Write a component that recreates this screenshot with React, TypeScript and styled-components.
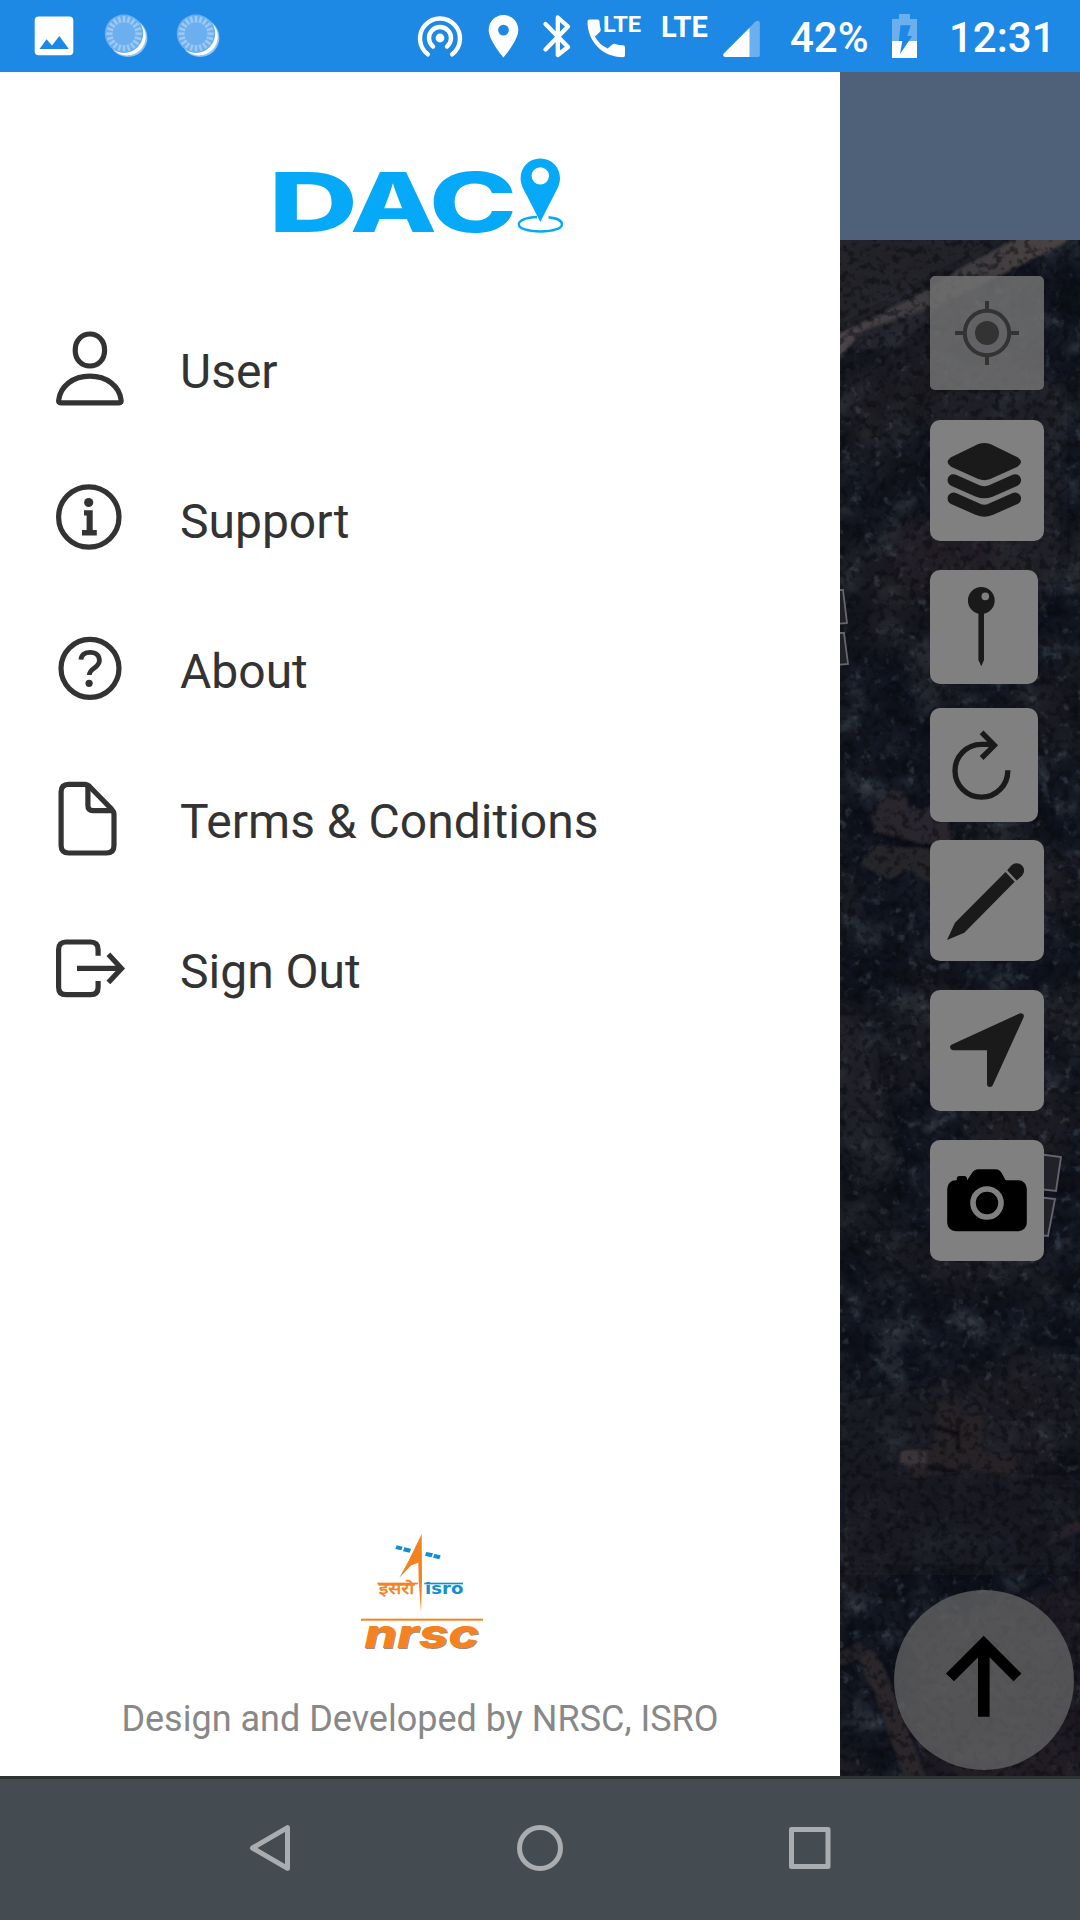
import React from 'react';
import styled, { createGlobalStyle } from 'styled-components';

const GlobalStyle = createGlobalStyle`
  * { box-sizing: border-box; }
  body { margin: 0; background: #fff; font-family: Roboto, "Noto Sans", sans-serif; }
  svg { display: block; flex: none; }
`;

const Screen = styled.div`
  width: 1080px;
  height: 1920px;
  display: flex;
  flex-direction: column;
  overflow: hidden;
`;

/* ---------- status bar ---------- */

const StatusBar = styled.header`
  height: 72px;
  flex: none;
  display: flex;
  background: #1e88e5;
  color: #fff;
`;

const StatusIcon = styled.svg<{ $gap: number }>`
  height: 72px;
  margin-left: ${(p) => p.$gap}px;
`;

const StatusText = styled.span<{ $gap: number; $width: number }>`
  width: ${(p) => p.$width}px;
  margin-left: ${(p) => p.$gap}px;
  font-size: 42px;
  font-weight: 500;
  line-height: 75px;
  white-space: nowrap;
`;

const NetworkText = styled.span`
  width: 48px;
  margin-left: 19px;
  font-size: 29px;
  font-weight: 700;
  line-height: 55px;
  white-space: nowrap;
`;

/* ---------- body ---------- */

const Body = styled.main`
  height: 1704px;
  flex: none;
  display: flex;
`;

const Drawer = styled.aside`
  width: 840px;
  flex: none;
  display: flex;
  flex-direction: column;
  align-items: center;
  padding-top: 78px;
  background: #fff;
`;

const LogoMark = styled.svg`
  overflow: visible;
`;

const Menu = styled.nav`
  width: 100%;
  margin-top: 56px;
  display: flex;
  flex-direction: column;
`;

const MenuRow = styled.a`
  height: 150px;
  display: flex;
  align-items: center;
  gap: 48px;
  padding-left: 48px;
  color: #333;
  font-size: 48px;
`;

const MenuLabel = styled.span`
  line-height: 56px;
  padding-top: 1px;
`;

const Footer = styled.footer`
  margin-top: auto;
  display: flex;
  flex-direction: column;
  align-items: center;
  padding-bottom: 35px;
`;

const Credit = styled.p`
  margin: 37px 0 0;
  font-size: 36px;
  line-height: 44px;
  color: #888;
  white-space: nowrap;
`;

/* ---------- map ---------- */

const MapColumn = styled.section`
  width: 240px;
  flex: none;
  display: flex;
  flex-direction: column;
`;

const MapHeader = styled.div`
  height: 168px;
  background: #4e6179;
`;

const MapArea = styled.div`
  height: 1536px;
  display: grid;
  grid-template: 1536px / 240px;
  > * { grid-area: 1 / 1; }
`;

const MapTools = styled.div`
  z-index: 1;
  display: flex;
  flex-direction: column;
  padding: 36px 6px 6px 90px;
`;

const ToolButton = styled.button<{ $w: number; $h: number; $gap?: number; $faint?: boolean }>`
  width: ${(p) => p.$w}px;
  height: ${(p) => p.$h}px;
  flex: none;
  margin: ${(p) => p.$gap ?? 0}px 0 0;
  padding: 0;
  border: 0;
  border-radius: ${(p) => (p.$faint ? 5 : 10)}px;
  background: ${(p) => (p.$faint ? 'rgba(116,116,116,.82)' : '#808080')};
  box-shadow: ${(p) => (p.$faint ? '0 1px 4px rgba(0,0,0,.25)' : 'none')};
  color: #1a1a1a;
`;

const NorthButton = styled.button`
  width: 180px;
  height: 180px;
  flex: none;
  align-self: flex-end;
  margin: auto 0 0;
  padding: 0;
  border: 0;
  border-radius: 50%;
  background: rgba(102, 102, 102, 0.74);
`;

/* ---------- system navigation ---------- */

const NavBar = styled.footer`
  height: 144px;
  flex: none;
  display: flex;
  justify-content: center;
  align-items: center;
  border-top: 3px solid #2d3235;
  padding-bottom: 3px;
  background: #454c51;
`;

const NavButton = styled.button`
  width: 270px;
  display: flex;
  justify-content: center;
  padding: 0;
  border: 0;
  background: none;
`;

const ticks = Array.from({ length: 20 }, (_, i) => i * 18);

function Spinner({ gap }: { gap: number }) {
  return (
    <StatusIcon $gap={gap} width="44" viewBox="104 0 44 72">
      <circle cx="128" cy="37.7" r="19.4" fill="#8fc3f1" />
      <circle cx="127" cy="36.7" r="18.8" fill="#fff" />
      <circle cx="124" cy="33.7" r="19.2" fill="#6bafee" />
      <g stroke="#9bc9f3" strokeWidth="2.6">
        {ticks.map((a) => (
          <line key={a} x1="124" y1="16" x2="124" y2="22.3" transform={`rotate(${a} 124 33.7)`} />
        ))}
      </g>
    </StatusIcon>
  );
}

function Status() {
  return (
    <StatusBar>
      <StatusIcon $gap={33} width="42" viewBox="33 0 42 72">
        <rect x="34.7" y="16.5" width="38.6" height="38.8" rx="4" fill="#fff" />
        <path d="M39.5 49 L46.5 39.2 L52 45.5 L59.3 36 L68.8 49Z" fill="#1e88e5" />
      </StatusIcon>
      <Spinner gap={29} />
      <Spinner gap={28} />
      <StatusIcon $gap={195} width="50" viewBox="415 0 50 72" fill="none" stroke="#fff" strokeWidth="4.4">
        <path d="M427.8 54.3 A20 20 0 1 1 452.2 54.3" strokeLinecap="round" />
        <path d="M433 46.5 A11 11 0 1 1 447 46.5" strokeLinecap="round" />
        <circle cx="440" cy="38" r="4.4" fill="#fff" stroke="none" />
      </StatusIcon>
      <StatusIcon $gap={21} width="36" viewBox="486 0 36 72">
        <path fill="#fff" fillRule="evenodd" d="M503.5 15 C495.2 15 488.7 21.6 488.7 30 C488.7 40.5 503.5 57.5 503.5 57.5 S518.3 40.5 518.3 30 C518.3 21.6 511.8 15 503.5 15Z M503.5 24.7 a5.4 5.4 0 1 1 0 10.8 a5.4 5.4 0 1 1 0 -10.8Z" />
      </StatusIcon>
      <StatusIcon $gap={18} width="34" viewBox="540 0 34 72">
        <path d="M545.5 24 L568 47 L557.8 55 V17.5 L568 26.5 L545.5 49.5" fill="none" stroke="#fff" strokeWidth="4.3" strokeLinejoin="round" strokeLinecap="round" />
      </StatusIcon>
      <StatusIcon $gap={10} width="58" viewBox="584 0 58 72" fill="#fff">
        <path d="M589.5 19.5 H597.5 Q599.5 19.5 599.5 21.5 Q599.5 25.5 600.6 29 Q601 30.7 600 31.8 L595 36.5 Q599 44.5 607.7 48.6 L612.6 44.2 Q613.8 43.4 615.2 43.9 Q618.6 45 622.9 45.2 Q625 45.3 625 47.2 V55.2 Q625 57.2 623 57.2 C602.5 57.2 587.5 41.5 587.5 21.5 Q587.5 19.5 589.5 19.5Z" />
        <text x="603" y="31.7" fontSize="22.5" fontWeight="700" textLength="38" lengthAdjust="spacingAndGlyphs">LTE</text>
      </StatusIcon>
      <NetworkText>LTE</NetworkText>
      <StatusIcon $gap={12} width="40" viewBox="721 0 40 72">
        <path d="M723.8 53.5 L755.5 21.6 Q759.6 19.5 759.8 23 V55.2 Q759.8 57 758 57 H725.5 Q722 56.5 723.8 53.5Z" fill="#6bafee" />
        <path d="M723.8 53.5 L749.5 28 V57 H725.5 Q722 56.5 723.8 53.5Z" fill="#fff" />
      </StatusIcon>
      <StatusText $gap={29} $width={78}>42%</StatusText>
      <StatusIcon $gap={23} width="27" viewBox="891 0 27 72">
        <path d="M892 19 H899 V14 H910 V19 H917 V41 H892Z" fill="#6bafee" />
        <path d="M892 41 H917 V58 H892Z" fill="#fff" />
        <path d="M900.5 25.3 H910.7 L907.3 36 H912.3 L900 54 L902.3 40.9 H898.8Z" fill="#1e88e5" />
      </StatusIcon>
      <StatusText $gap={31} $width={104}>12:31</StatusText>
    </StatusBar>
  );
}

function Logo() {
  return (
    <LogoMark width="300" height="90" viewBox="270 150 300 90" fill="#06a9f8">
      <g fontFamily="Inter, 'Liberation Sans', sans-serif" fontWeight="800" fontSize="82.5">
        <text x="268.5" y="232" textLength="89.5" lengthAdjust="spacingAndGlyphs">D</text>
        <text x="350" y="232" textLength="87" lengthAdjust="spacingAndGlyphs">A</text>
        <text x="429" y="232" textLength="88" lengthAdjust="spacingAndGlyphs">C</text>
      </g>
      <path fillRule="evenodd" d="M540.3 158.5 C529 158.5 520.6 167 520.6 178.2 C520.6 184 523.5 189.5 526 194 L540.3 222 L554.6 194 C557 189.5 560 184 560 178.2 C560 167 551.6 158.5 540.3 158.5Z M540.3 167.2 a8.7 8.7 0 1 1 0 17.4 a8.7 8.7 0 1 1 0 -17.4Z" />
      <path d="M537 217 C526 217.3 518.8 220.5 518.8 224.2 C518.8 228.5 528 231.5 540.5 231.5 S562 228.5 562 224.2 C562 220.7 556.5 218 548.5 217.2" fill="none" stroke="#06a9f8" strokeWidth="2.4" />
    </LogoMark>
  );
}

const menu: { label: string; art: React.ReactNode }[] = [
  {
    label: 'User',
    art: (
      <>
        <path d="M41.9 8 C50.2 8 56.6 14.4 56.6 24.2 C56.6 33.8 50 40 41.9 40 S27.2 33.8 27.2 24.2 C27.2 14.4 33.6 8 41.9 8Z" />
        <path d="M10.7 74 C12.5 60 25 50.2 41.9 50.2 S71.3 60 73.1 74 Q73.6 76.8 71 76.8 H12.8 Q10.2 76.8 10.7 74Z" />
      </>
    ),
  },
  {
    label: 'Support',
    art: (
      <>
        <circle cx="40.8" cy="41" r="30.2" />
        <circle cx="40.7" cy="26.5" r="4.6" fill="#333" stroke="none" />
        <path d="M36 34.2 H44.7 V53.9 H48.8 V59.5 H34 V53.9 H38.6 V39.5 H36Z" fill="#333" stroke="none" />
      </>
    ),
  },
  {
    label: 'About',
    art: (
      <>
        <circle cx="42" cy="42.3" r="29" />
        <path d="M33 33.7 C33.2 29 36.7 26.3 42.3 26.3 S51.4 29.5 51.4 34.6 C51.4 42.3 41.4 41.5 41.4 49" strokeWidth="4.8" />
        <circle cx="41.1" cy="57.3" r="3.6" fill="#333" stroke="none" />
      </>
    ),
  },
  {
    label: 'Terms & Conditions',
    art: (
      <>
        <path d="M20.6 8.3 H36.5 Q39.8 8.3 42 11 L63.5 33 Q66 35.6 66 38 V69.5 Q66 77 58.5 77 H20.6 Q13.1 77 13.1 69.5 V15.8 Q13.1 8.3 20.6 8.3Z" />
        <path d="M39.9 8.3 V29.5 Q39.9 34.6 45 34.6 H65" />
      </>
    ),
  },
  {
    label: 'Sign Out',
    art: (
      <>
        <path d="M50.1 29.7 V23.5 Q50.1 16 42.6 16 H18.1 Q10.6 16 10.6 23.5 V61.2 Q10.6 68.7 18.1 68.7 H42.6 Q50.1 68.7 50.1 61.2 V55" />
        <path d="M29 42.4 H74" />
        <path d="M60.4 28.3 L73.5 42.4 L60.4 56.5" />
      </>
    ),
  },
];

function IsroLogo() {
  return (
    <LogoMark width="160" height="140" viewBox="0 0 480 420">
      <g fill="#f58220">
        <path d="M245 42 L246 180 L243 276 L236 180 L235 128 L214 136 L178 173 L207 120Z" />
        <rect x="112" y="188" width="122" height="5" />
        <text x="116" y="223" fontSize="50" fontWeight="400" stroke="#f58220" strokeWidth="1.5" fontFamily="'Noto Sans Devanagari', 'Noto Sans', FreeSans, sans-serif" textLength="107" lengthAdjust="spacingAndGlyphs">इसरो</text>
        <rect x="63" y="296" width="366" height="6" />
      </g>
      <g fill="#1090d0">
        <path d="M170 76 L188 80 L184 91 L166 87Z M193 82 L213 86 L209 98 L189 94Z M259 96 L279 100 L275 112 L255 107Z M283 102 L302 106 L298 118 L279 113Z" />
        <rect x="253" y="188" width="116" height="5" />
        <text x="255" y="221" fontSize="48" fontWeight="700" fontFamily="'DejaVu Sans', sans-serif" textLength="115" lengthAdjust="spacingAndGlyphs">isro</text>
      </g>
      <g fontFamily="Inter, 'Liberation Sans', sans-serif" fontWeight="800" fontStyle="italic" fontSize="122">
        <text x="76" y="386" fill="#a28b78" textLength="344" lengthAdjust="spacingAndGlyphs">nrsc</text>
        <text x="73" y="383" fill="#f58220" textLength="344" lengthAdjust="spacingAndGlyphs">nrsc</text>
      </g>
    </LogoMark>
  );
}

function Satellite() {
  return (
    <svg width="240" height="1536" viewBox="0 0 240 1536">
      <defs>
        <filter id="canopy" x="0" y="0" width="100%" height="100%" colorInterpolationFilters="sRGB">
          <feTurbulence type="fractalNoise" baseFrequency="0.028" numOctaves="5" seed="11" />
          <feColorMatrix values="1 0 0 0 0  1 0 0 0 0  1 0 0 0 0  0 0 0 0 1" />
          <feComponentTransfer result="tone">
            <feFuncR type="table" tableValues="0.045 0.05 0.062 0.09 0.17 0.3" />
            <feFuncG type="table" tableValues="0.055 0.062 0.074 0.105 0.195 0.33" />
            <feFuncB type="table" tableValues="0.075 0.09 0.115 0.145 0.23 0.36" />
          </feComponentTransfer>
          <feGaussianBlur stdDeviation="0.8" />
        </filter>
        <filter id="haze" x="0" y="0" width="100%" height="100%" colorInterpolationFilters="sRGB">
          <feTurbulence type="fractalNoise" baseFrequency="0.008" numOctaves="2" seed="23" />
          <feColorMatrix values="0 0 0 0 .15  0 0 0 0 .135  0 0 0 0 .15  4 0 0 0 -1.8" />
        </filter>
        <filter id="grain" x="0" y="0" width="100%" height="100%" colorInterpolationFilters="sRGB">
          <feTurbulence type="fractalNoise" baseFrequency="0.09" numOctaves="3" seed="4" />
          <feColorMatrix values="0 0 0 0 .28  0 0 0 0 .33  0 0 0 0 .38  5 0 0 0 -3.05" />
          <feGaussianBlur stdDeviation="0.7" />
        </filter>
        <filter id="speckle" x="0" y="0" width="100%" height="100%" colorInterpolationFilters="sRGB">
          <feTurbulence type="fractalNoise" baseFrequency="0.13" numOctaves="3" seed="31" />
          <feColorMatrix values="0 0 0 0 .03  0 0 0 0 .035  0 0 0 0 .05  0 5 0 0 -2.5" />
          <feGaussianBlur stdDeviation="0.7" />
        </filter>
        <filter id="soft" x="-30%" y="-30%" width="160%" height="160%">
          <feGaussianBlur stdDeviation="8" />
        </filter>
        <filter id="edge"><feGaussianBlur stdDeviation="1.6" /></filter>
        <linearGradient id="road" x1="0" x2="1" y1="0" y2="0">
          <stop offset="0" stopColor="#4b4447" />
          <stop offset=".45" stopColor="#3d3a3f" />
          <stop offset="1" stopColor="#4b4343" />
        </linearGradient>
      </defs>
      <rect width="240" height="1536" fill="#141821" />
      <rect width="240" height="1536" filter="url(#canopy)" />
      <rect width="240" height="1536" filter="url(#haze)" opacity=".55" />
      <rect width="240" height="1536" filter="url(#grain)" opacity=".42" />
      <g filter="url(#soft)">
        <path d="M-10 -10 H190 L90 44 L-10 100Z" fill="#262428" opacity=".9" />
        <path d="M100 150 L160 110 L220 140 V320 L190 390 L150 310 L80 170Z" fill="#29262b" opacity=".6" />
        <path d="M60 290 L120 260 L200 330 L160 370 L60 340Z" fill="#272428" opacity=".5" />
        <path d="M0 760 L30 810 L60 930 L20 950 L-10 860Z" fill="#24242b" opacity=".6" />
        <path d="M-10 1160 L100 1140 L190 1190 L160 1250 H-10Z" fill="#222126" opacity=".6" />
        <path d="M0 1240 H240 V1330 H0Z" fill="#171a24" opacity=".7" />
        <path d="M70 1400 L240 1340 V1560 H80Z" fill="#242226" opacity=".6" />
      </g>
      <g filter="url(#edge)">
        <path d="M-5 95 L33 78 L90 48 L117 30 L170 2 L180 -6 H236 L223 4 L163 34 L90 70 L24 90 L-5 124Z" fill="url(#road)" />
        <path d="M24 90 L90 66 L110 58 L90 76 L60 104 L10 112Z" fill="#2b2b33" opacity=".7" />
        <path d="M36 570 L46 553 L66 551 L68 568 L82 570 L106 560 L112 612 L90 608 L70 600 L36 592 L31 577Z" fill="#2a272d" />
        <path d="M32 604 L60 608 L110 610 V642 L84 640 L70 628 L50 640 L20 624Z" fill="#27252a" />
        <path d="M40 592 L70 602 L112 606 V611 L60 606Z" fill="#0b0c12" />
        <path d="M96 1163 L118 1160 L120 1176 L143 1174 V1212 L176 1216 L173 1236 L130 1230 L70 1238 L64 1222 L94 1204 L96 1186Z" fill="#252327" />
        <path d="M60 1209 L86 1211 V1226 L60 1224Z" fill="#3b363b" />
        <path d="M118 1178 V1210 M97 1188 L118 1194 M86 1228 L116 1231" stroke="#0c0c11" strokeWidth="4" fill="none" />
        <path d="M15 1412 Q35 1400 47 1435 L87 1540 H65 L35 1455Z" fill="#2b2629" />
        <path d="M-5 1415 L20 1402 L28 1415 L-5 1428Z" fill="#222328" />
        <path d="M205 1307 Q218 1285 245 1278 V1290 Q225 1295 205 1307Z" fill="#27242a" />
      </g>
      <rect width="240" height="1536" filter="url(#speckle)" opacity=".45" />
      <g fill="#212228" stroke="#66646f" strokeWidth="1.8">
        <path d="M-4 350 L3 350 L7 383 L-4 384Z" />
        <path d="M-4 393 L4 393 L8 424 L-4 425Z" />
        <path d="M198 914 L221 917 L216 951 L198 949Z" />
        <path d="M198 957 L215 959 L208 996 L198 995Z" />
      </g>
    </svg>
  );
}

function MapPanel() {
  return (
    <MapColumn>
      <MapHeader />
      <MapArea>
        <Satellite />
        <MapTools>
          <ToolButton $w={114} $h={114} $faint aria-label="Locate me">
            <svg width="114" height="114" stroke="#333" strokeWidth="4" fill="none">
              <circle cx="57" cy="57" r="22.2" />
              <circle cx="57" cy="57" r="12" fill="#333" stroke="none" />
              <path d="M57 25 V33 M57 81 V89 M25 57 H33 M81 57 H89" />
            </svg>
          </ToolButton>
          <ToolButton $w={114} $h={121} $gap={30} aria-label="Layers">
            <svg width="114" height="121" fill="currentColor">
              <path d="M48.3 24 Q54.3 21.8 60.3 24 L87.5 37.2 Q94.5 42 87.5 46.7 L60.3 59 Q54.3 61.3 48.3 59 L21.1 46.7 Q14.1 42 21.1 37.2Z" />
              <g fill="none" stroke="currentColor" strokeWidth="12" strokeLinecap="round">
                <path d="M23.5 60.2 L48.3 71.2 Q54.3 73.5 60.3 71.2 L85.1 60.2" />
                <path d="M23.5 78.5 L48.3 89.5 Q54.3 91.8 60.3 89.5 L85.1 78.5" />
              </g>
            </svg>
          </ToolButton>
          <ToolButton $w={108} $h={114} $gap={29} aria-label="Drop pin">
            <svg width="108" height="114" fill="currentColor">
              <path fillRule="evenodd" d="M51.3 17 a13.4 13.4 0 1 1 0 26.8 a13.4 13.4 0 1 1 0 -26.8Z M55.3 22.6 a3.8 3.8 0 1 0 0 7.6 a3.8 3.8 0 1 0 0 -7.6Z" />
              <path d="M48.4 42 H54 V90 L51.3 96.3 L48.4 90Z" />
            </svg>
          </ToolButton>
          <ToolButton $w={108} $h={114} $gap={24} aria-label="Refresh">
            <svg width="108" height="114" fill="none" stroke="currentColor" strokeWidth="5.3">
              <path d="M77.8 62.3 A26.4 26.4 0 1 1 51.4 36.4 H64" />
              <path d="M51.6 24.3 L64.4 37.3 L51.6 50" />
            </svg>
          </ToolButton>
          <ToolButton $w={114} $h={121} $gap={18} aria-label="Draw">
            <svg width="114" height="121" fill="currentColor">
              <path d="M75.5 32 L84.7 41.7 L34.3 92.7 L17 99.9 L25 82.7Z" />
              <path d="M77.2 30.3 L81.3 25.5 A7.4 7.4 0 0 1 92 35.8 L86.7 40.4Z" />
            </svg>
          </ToolButton>
          <ToolButton $w={114} $h={121} $gap={29} aria-label="Navigate">
            <svg width="114" height="121" fill="currentColor" stroke="currentColor" strokeWidth="6" strokeLinejoin="round">
              <path d="M90.8 26.3 L23.2 57.3 H60 V94Z" />
            </svg>
          </ToolButton>
          <ToolButton $w={114} $h={121} $gap={29} aria-label="Camera">
            <svg width="114" height="121" fill="#000">
              <rect x="17.2" y="40.3" width="79.6" height="51" rx="8.5" />
              <path d="M26.7 41 V39 Q26.7 36 29.7 36 H34 Q37 36 37 39 V40.5 L42 33 Q44.3 29.2 48.5 29.2 H65.5 Q69.7 29.2 71.7 33 L76 41Z" />
              <circle cx="57" cy="63" r="14" fill="none" stroke="#808080" strokeWidth="5.6" />
            </svg>
          </ToolButton>
          <NorthButton aria-label="Go up">
            <svg width="180" height="180">
              <path d="M89.7 45.7 L127.4 83.4 L119.5 91.2 L95.6 67.3 V126.7 H84 V67.3 L60 91.2 L52 83.4Z" />
            </svg>
          </NorthButton>
        </MapTools>
      </MapArea>
    </MapColumn>
  );
}

export default function App() {
  return (
    <>
      <GlobalStyle />
      <Screen>
        <Status />
        <Body>
          <Drawer>
            <Logo />
            <Menu>
              {menu.map((item) => (
                <MenuRow key={item.label}>
                  <svg width="84" height="90" fill="none" stroke="#333" strokeWidth="5.2">
                    {item.art}
                  </svg>
                  <MenuLabel>{item.label}</MenuLabel>
                </MenuRow>
              ))}
            </Menu>
            <Footer>
              <IsroLogo />
              <Credit>Design and Developed by NRSC, ISRO</Credit>
            </Footer>
          </Drawer>
          <MapPanel />
        </Body>
        <NavBar>
          <NavButton aria-label="Back">
            <svg width="48" height="48" fill="none" stroke="#a9adaf" strokeWidth="5" strokeLinejoin="round">
              <path d="M41.5 3.7 V44.3 L6.5 24Z" />
            </svg>
          </NavButton>
          <NavButton aria-label="Home">
            <svg width="48" height="48" fill="none" stroke="#a9adaf" strokeWidth="5">
              <circle cx="24" cy="24" r="20.5" />
            </svg>
          </NavButton>
          <NavButton aria-label="Recent apps">
            <svg width="48" height="48" fill="none" stroke="#a9adaf" strokeWidth="5" strokeLinejoin="round">
              <rect x="5.5" y="5.5" width="36.5" height="37" />
            </svg>
          </NavButton>
        </NavBar>
      </Screen>
    </>
  );
}
